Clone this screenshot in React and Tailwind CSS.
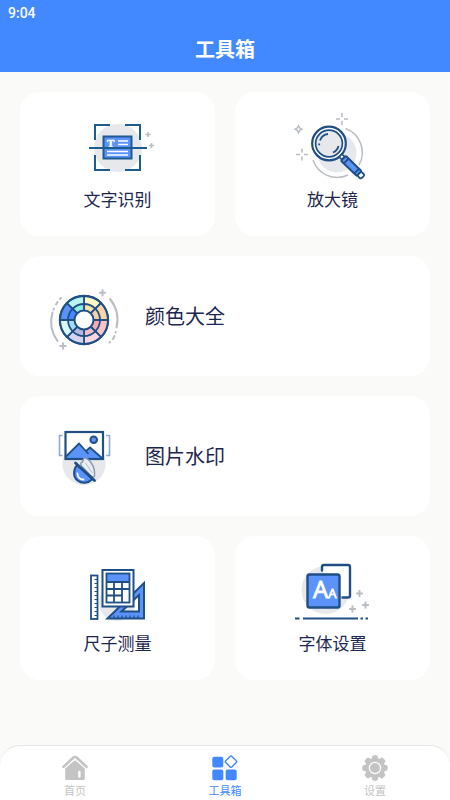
import React, { useState } from "react";

const NAVY = "#1f4f85";
const BLUE = "#5b93fb";
const GRAY = "#b9bec5";
const DISC = "#e6e8eb";

function Plus({ x, y, r = 3, gap = false, w = 2 }) {
  const d = gap
    ? `M${x - r} ${y}h${r - 2}M${x + 2} ${y}h${r - 2}M${x} ${y - r}v${r - 2}M${x} ${y + 2}v${r - 2}`
    : `M${x - r} ${y}h${r * 2}M${x} ${y - r}v${r * 2}`;
  return <path d={d} stroke={GRAY} strokeWidth={w} fill="none" />;
}

function Icon({ children }) {
  return (
    <svg width="80" height="72" viewBox="0 0 80 72" fill="none" aria-hidden="true" className="shrink-0">
      {children}
    </svg>
  );
}

function OcrIcon() {
  return (
    <Icon>
      <circle cx="40" cy="36" r="24" fill={DISC} />
      <path d="M32 13H17V28M47 13H62V28M17 43V58H32M62 43V58H47" stroke="#1d5c93" strokeWidth="2" />
      <rect x="25.5" y="24.5" width="28" height="22" fill={BLUE} stroke="#1d5c93" strokeWidth="2" />
      <text x="29" y="35" fontSize="11" fontWeight="bold" fill="#fff" stroke="#fff" strokeWidth="0.4" fontFamily="Liberation Serif, serif">
        T
      </text>
      <path d="M40 29h10M40 32.5h10M29 39.5h21M29 43h21" stroke="#fff" strokeWidth="1.3" />
      <path d="M11 36H69" stroke="#1d5c93" strokeWidth="2" />
      <Plus x={70} y={22.5} r={2.6} w={1.6} />
      <Plus x={73.5} y={33.5} r={2.6} w={1.6} />
    </Icon>
  );
}

function MagnifierIcon() {
  return (
    <Icon>
      <circle cx="44" cy="41" r="19.5" fill={DISC} />
      <path d="M52.5 16.5A25.5 25.5 0 0 1 66 53M20 48A25.5 25.5 0 0 0 55 63" stroke={GRAY} strokeWidth="1.5" />
      <circle cx="36" cy="31.5" r="15" fill={DISC} stroke="#fff" strokeWidth="3" />
      <circle cx="36" cy="31.5" r="16.8" stroke={NAVY} strokeWidth="2.2" />
      <circle cx="36" cy="31.5" r="13.4" stroke={NAVY} strokeWidth="1.7" />
      <path
        d="M27 28.5A9.6 9.6 0 0 1 35 22M26.2 31.5V33.2M45.5 34A9.6 9.6 0 0 1 40 40.5"
        stroke={NAVY}
        strokeWidth="1.8"
      />
      <g transform="translate(47.5 43.5) rotate(44)">
        <rect x="0" y="-2" width="4" height="4" fill="#fff" stroke={NAVY} strokeWidth="1.6" />
        <rect x="4" y="-3.4" width="22" height="6.8" rx="1" fill={BLUE} stroke={NAVY} strokeWidth="2" />
        <path d="M8 -3V3M22.5 -3V3" stroke={NAVY} strokeWidth="1.8" />
        <rect x="26" y="-2.8" width="5" height="5.6" rx="1.5" fill="#fff" stroke={NAVY} strokeWidth="1.8" />
      </g>
      <Plus x={49} y={7} r={6} gap w={1.6} />
      <Plus x={9} y={42.5} r={6} gap w={1.6} />
      <path d="M5.5 13.8l1.2 2.2 2.2 1.2-2.2 1.2-1.2 2.2-1.2-2.2-2.2-1.2 2.2-1.2z" stroke={GRAY} strokeWidth="1.5" />
    </Icon>
  );
}

// clockwise from 12 o'clock: [outer, inner]
const wheel = [
  ["#fbf6c4", "#fae3a8"],
  ["#fbd5a6", "#f8cfa8"],
  ["#f9c4c6", "#f8aab0"],
  ["#f9d6e0", "#f8bccb"],
  ["#d6d2f1", "#b6b9dc"],
  ["#d9f8fd", "#a3dcfa"],
  ["#5b93fb", "#4a86f8"],
  ["#b9f4f2", "#8eeee2"],
];

function sector(i, r) {
  const cx = 40;
  const cy = 40;
  const a = ((i * 45 - 90) * Math.PI) / 180;
  const b = a + Math.PI / 4;
  return `M${cx} ${cy}L${cx + r * Math.cos(a)} ${cy + r * Math.sin(a)}A${r} ${r} 0 0 1 ${cx + r * Math.cos(b)} ${cy + r * Math.sin(b)}Z`;
}

function ColorWheelIcon() {
  return (
    <Icon>
      {wheel.map(([outer], i) => (
        <path key={i} d={sector(i, 24)} fill={outer} stroke={NAVY} strokeWidth="1.8" />
      ))}
      {wheel.map(([, inner], i) => (
        <path key={i} d={sector(i, 16)} fill={inner} stroke={NAVY} strokeWidth="1.8" />
      ))}
      <circle cx="40" cy="40" r="24.2" stroke={NAVY} strokeWidth="2" />
      <circle cx="40" cy="40" r="9.5" fill="#fff" stroke={NAVY} strokeWidth="2" />
      <path
        d="M8.5 32.5A33 33 0 0 0 13.5 61M66 19A33 33 0 0 1 72.5 47.5"
        stroke={GRAY}
        strokeWidth="2"
        strokeLinecap="round"
      />
      <path
        d="M9.5 29.5L10 28.5M12 24.5L13.5 22M16 19L17 18M71.7 52v.5M70.5 56L69 59M66 62L65.5 62.6"
        stroke={GRAY}
        strokeWidth="2"
        strokeLinecap="round"
      />
      <Plus x={58.5} y={12.8} r={3.4} />
      <Plus x={19} y={66} r={3.4} />
    </Icon>
  );
}

function WatermarkIcon() {
  return (
    <Icon>
      <circle cx="40" cy="43.5" r="21.7" fill={DISC} />
      <path d="M18.5 15.5H15.5V35.5H18.5M62 15.5H65.5V35.5H62" stroke="#8fa9cf" strokeWidth="1.6" />
      <rect x="21.5" y="12" width="37.5" height="27" fill="#fff" />
      <path d="M22 37L35 23.5L42 31L46 27.500L58.5 39H22Z" fill={BLUE} />
      <path d="M22 36.5L35 23.5L44.5 34M41.5 31.5L46 27.500L58.5 38.5" stroke={NAVY} strokeWidth="1.8" />
      <rect x="21.5" y="12" width="37.5" height="27" stroke={NAVY} strokeWidth="2.2" />
      <circle cx="49.7" cy="19.8" r="3.3" fill={BLUE} stroke={NAVY} strokeWidth="2" />
      <path
        d="M40 38C45 38 51.5 46 50.5 56C50 57.500 48 57 46.500 55.500L37.500 46C36 44 37 42 38.500 42Z"
        fill="#e9ecf1"
        stroke="#8b9bb2"
        strokeWidth="1.5"
      />
      <path d="M41.5 43L48.500 53" stroke="#b5bfcd" strokeWidth="1" />
      <path
        d="M33 45C29 50 29 57 33.500 60.500C38 64 44 63.500 48.500 59Z"
        fill={BLUE}
        stroke={NAVY}
        strokeWidth="2"
      />
      <path d="M33.500 53.500C33.500 57 36 59.500 39.500 59.500" stroke="#fff" strokeWidth="1.8" strokeLinecap="round" />
      <path d="M31.500 43L50.500 60.500" stroke={NAVY} strokeWidth="2.8" strokeLinecap="round" />
    </Icon>
  );
}

function RulerIcon() {
  return (
    <Icon>
      <circle cx="39" cy="47" r="18" fill={DISC} />
      <rect x="13" y="19.5" width="6.5" height="43.5" fill="#fff" stroke={NAVY} strokeWidth="1.8" />
      <path
        d="M16.5 23.5h3M16.5 27.5h3M16.5 31.5h3M16.5 35.5h3M16.5 39.5h3M16.5 43.5h3M16.5 47.5h3M16.5 51.5h3M16.5 55.5h3M16.5 59.5h3"
        stroke={NAVY}
        strokeWidth="1"
      />
      <path
        fillRule="evenodd"
        d="M29.5 62.5L66 27V62.5ZM43.5 55.5H61V39Z"
        fill={BLUE}
        stroke={NAVY}
        strokeWidth="2"
      />
      <path
        d="M36 59.5v3M40 59.5v3M44 59.5v3M48 59.5v3M52 59.5v3M56 59.5v3M60 59.5v3"
        stroke={NAVY}
        strokeWidth="1.2"
      />
      <rect x="24.5" y="14" width="31" height="36.5" fill="#fff" stroke={NAVY} strokeWidth="2" />
      <rect x="28.5" y="17.5" width="23" height="8.5" fill={BLUE} />
      <rect x="28.5" y="17.5" width="23" height="29" stroke={NAVY} strokeWidth="1.8" />
      <path d="M28.5 26H51.5M28.5 33H51.5M28.5 39.5H44M36 26V46.5M44 26V46.5" stroke={NAVY} strokeWidth="1.8" />
    </Icon>
  );
}

function FontIcon() {
  return (
    <Icon>
      <circle cx="32.5" cy="34" r="24" fill={DISC} />
      <path
        d="M29 14.5V11Q29 9 31 9H55Q57 9 57 11V39.5Q57 41.5 55 41.5H49.5"
        fill="#fff"
        stroke={NAVY}
        strokeWidth="2.4"
        strokeLinecap="round"
      />
      <rect x="14.5" y="18.5" width="32" height="33" rx="2" fill={BLUE} stroke={NAVY} strokeWidth="2.4" />
      <text x="20" y="41.5" fontSize="24" fill="#fff" stroke="#fff" strokeWidth="0.8" fontFamily="Open Sans, sans-serif">
        A<tspan fontSize="13">A</tspan>
      </text>
      <path d="M2 62.5h4.5M10 62.5H65M67.5 62.5h2.5M72.5 62.5h2.5" stroke={NAVY} strokeWidth="2" />
      <Plus x={66.5} y={37.5} r={3.4} />
      <Plus x={72.5} y={49} r={3.4} />
      <Plus x={59.5} y={53} r={3.4} />
    </Icon>
  );
}

function HomeGlyph() {
  return (
    <svg width="26" height="26" viewBox="0 0 26 26" aria-hidden="true">
      <path
        d="M1.5 11.8L11.5 2.6Q13 1.4 14.5 2.6L24.5 11.8"
        fill="none"
        stroke="currentColor"
        strokeWidth="2.6"
        strokeLinecap="round"
      />
      <path
        d="M3.2 13.5L12 5.9Q13 5.2 14 5.9L22.8 13.5V23.5Q22.8 25 21.3 25H4.7Q3.2 25 3.2 23.5Z"
        fill="currentColor"
      />
      <rect x="16.2" y="15.8" width="2.4" height="7" rx="1.2" fill="#fff" />
    </svg>
  );
}

function ToolGlyph() {
  return (
    <svg width="26" height="26" viewBox="0 0 26 26" fill="currentColor" aria-hidden="true">
      <rect x="0.3" y="1.7" width="11" height="10.8" rx="2" />
      <rect x="0.3" y="14.4" width="11" height="10.8" rx="2" />
      <rect x="13.7" y="14.4" width="11" height="10.8" rx="2" />
      <rect
        x="14.7"
        y="2.4"
        width="8.6"
        height="8.6"
        rx="1.2"
        transform="rotate(45 19 6.7)"
        fill="none"
        stroke="currentColor"
        strokeWidth="1.4"
      />
    </svg>
  );
}

function GearGlyph() {
  return (
    <svg width="26" height="26" viewBox="0 0 26 26" fill="currentColor" aria-hidden="true">
      <circle cx="13" cy="13" r="10.2" />
      {[0, 45, 90, 135].map((deg) => (
        <rect key={deg} x="10" y="0.3" width="6" height="25.4" rx="2" transform={`rotate(${deg} 13 13)`} />
      ))}
      <circle cx="13" cy="13" r="5.6" fill="none" stroke="#fff" strokeWidth="1.2" />
    </svg>
  );
}

function Tile({ icon: TileIcon, label }) {
  return (
    <button type="button" className="flex flex-col items-center gap-[3px] rounded-[20px] bg-white pt-5 pb-[25px]">
      <TileIcon />
      <span className="text-[17px] leading-6">{label}</span>
    </button>
  );
}

function WideTile({ icon: TileIcon, label }) {
  return (
    <button type="button" className="col-span-2 flex items-center gap-[21px] rounded-[20px] bg-white p-6">
      <TileIcon />
      <span className="text-[20px] leading-[26px]">{label}</span>
    </button>
  );
}

const tabs = [
  { id: "home", label: "首页", glyph: HomeGlyph },
  { id: "tools", label: "工具箱", glyph: ToolGlyph },
  { id: "settings", label: "设置", glyph: GearGlyph },
];

function App() {
  const [active, setActive] = useState("tools");

  return (
    <div className="flex min-h-screen flex-col bg-[#fafaf8] font-['Noto_Sans_CJK_SC',sans-serif] text-[#1c2650]">
      <header className="bg-[#4289ff] text-white">
        <div className="px-2 pt-1 font-['Roboto',sans-serif] text-[14px] leading-[18px] font-medium">9:04</div>
        <h1 className="pt-[14px] pb-[10px] text-center text-[20px] leading-[26px] font-bold">工具箱</h1>
      </header>

      <main className="grid flex-1 grid-cols-2 content-start gap-5 p-5">
        <Tile icon={OcrIcon} label="文字识别" />
        <Tile icon={MagnifierIcon} label="放大镜" />
        <WideTile icon={ColorWheelIcon} label="颜色大全" />
        <WideTile icon={WatermarkIcon} label="图片水印" />
        <Tile icon={RulerIcon} label="尺子测量" />
        <Tile icon={FontIcon} label="字体设置" />
      </main>

      <nav className="sticky bottom-0 grid grid-cols-3 rounded-t-[20px] border-t border-[#e4e4e4] bg-white pt-[9px] pb-px">
        {tabs.map(({ id, label, glyph: Glyph }) => (
          <a
            key={id}
            href={`#${id}`}
            onClick={() => setActive(id)}
            className={`flex flex-col items-center gap-px text-[11px] leading-[17px] ${
              active === id ? "text-[#4289ff]" : "text-[#c4c4c4]"
            }`}
          >
            <Glyph />
            {label}
          </a>
        ))}
      </nav>
    </div>
  );
}

export default App;
